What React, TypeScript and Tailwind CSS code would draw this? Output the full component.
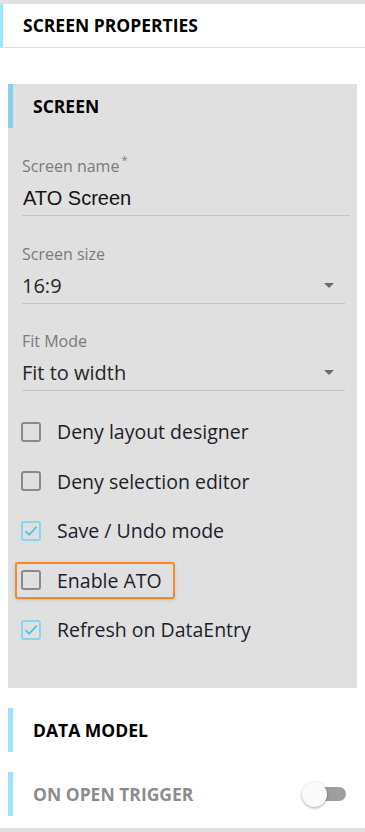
import React, { useState } from 'react';

const font = { fontFamily: '"Open Sans", "Noto Sans", sans-serif' };

interface CheckProps {
  label: string;
  checked: boolean;
  highlight?: boolean;
}

const CheckRow: React.FC<CheckProps> = ({ label, checked, highlight }) => {
  const [on, setOn] = useState(checked);
  return (
    <div className="h-[49.5px] flex items-center">
      <label
        onClick={() => setOn(!on)}
        className={`flex items-center h-[37px] pl-[4px] pr-[11px] -ml-[7px] rounded-[3px] border-2 cursor-pointer ${
          highlight ? 'border-[#f08a2c] shadow-[0_1px_4px_rgba(0,0,0,0.12)]' : 'border-transparent'
        }`}
      >
        <span
          className={`w-[20px] h-[20px] rounded-[3px] border-2 flex items-center justify-center ${
            on ? 'border-[#86d6f3]' : 'border-[#8a8a8a]'
          }`}
        >
          {on && (
            <svg width="14" height="12" viewBox="0 0 14 12" fill="none">
              <path d="M1.5 6.2 L5.2 9.8 L12.5 1.8" stroke="#4bbfe8" strokeWidth="1.8" />
            </svg>
          )}
        </span>
        <span className="ml-[16px] text-[19.5px] text-[#1d1d2b] leading-none">{label}</span>
      </label>
    </div>
  );
};

const Field: React.FC<{ label: string; value: string; select?: boolean; required?: boolean }> = ({
  label,
  value,
  select,
  required,
}) => (
  <div className={`${select ? 'mr-[12px]' : 'mr-[7px]'}`}>
    <div className="h-[20px] flex items-center text-[16px] text-[#7a7a7a]">
      {label}
      {required && <span className="text-[11px] ml-[2px] self-start leading-none -mt-[2px]">*</span>}
    </div>
    <div className="mt-[4px] flex items-center h-[36px] border-b border-[#c4c4c4]">
      <span
        className={`flex-1 text-[20px] ${select ? 'text-[#262626]' : 'text-[#141414] ml-[1px]'}`}
        style={select ? undefined : { fontFamily: '"Liberation Sans", Arial, sans-serif' }}
      >
        {value}
      </span>
      {select && (
        <svg width="10" height="5" viewBox="0 0 10 5" className="mr-[11px]">
          <path d="M0 0 H10 L5 5 Z" fill="#6b6b6b" />
        </svg>
      )}
    </div>
  </div>
);

export default function App() {
  const [trigger, setTrigger] = useState(false);

  return (
    <div className="w-[365px] h-[832px] bg-white flex flex-col" style={font}>
      <div className="h-[4px] bg-[#e0e0e0]" />
      <div className="h-[44px] flex items-center border-b border-[#e0e0e0] border-l-[3px] border-l-[#9fe3f8] pl-[20px]">
        <span className="text-[17.5px] font-bold text-black">SCREEN PROPERTIES</span>
      </div>

      <div className="mt-[36px] mx-[8px] bg-[#e0e0e0] h-[604px] flex flex-col">
        <div className="h-[44px] flex items-center border-l-[5px] border-l-[#87d0ea] pl-[20px]">
          <span className="text-[17.5px] font-bold text-black">SCREEN</span>
        </div>
        <div className="pl-[14px] pt-[28px]">
          <Field label="Screen name" value="ATO Screen" required />
          <div className="h-[28px]" />
          <Field label="Screen size" value="16:9" select />
          <div className="h-[27px]" />
          <Field label="Fit Mode" value="Fit to width" select />
          <div className="pt-[16px]">
            <CheckRow label="Deny layout designer" checked={false} />
            <CheckRow label="Deny selection editor" checked={false} />
            <CheckRow label="Save / Undo mode" checked />
            <CheckRow label="Enable ATO" checked={false} highlight />
            <CheckRow label="Refresh on DataEntry" checked />
          </div>
        </div>
      </div>

      <div className="mt-[20px] mx-[8px] h-[44px] flex items-center border-l-[5px] border-l-[#9fe3f8] pl-[20px]">
        <span className="text-[17.5px] font-bold text-black">DATA MODEL</span>
      </div>

      <div className="mt-[20px] mx-[8px] h-[44px] flex items-center border-l-[5px] border-l-[#9fe3f8] pl-[20px] pr-[11px]">
        <span className="flex-1 text-[17.5px] font-bold text-[#8c8c8c]">ON OPEN TRIGGER</span>
        <button onClick={() => setTrigger(!trigger)} className="relative w-[38px] h-[24px] flex items-center">
          <span className="absolute left-[4px] right-0 h-[14px] rounded-full bg-[#9e9e9e]" />
          <span
            className={`absolute top-0 w-[25px] h-[25px] rounded-full bg-[#fafafa] shadow-[0_1px_3px_rgba(0,0,0,0.35)] ${
              trigger ? 'left-[14px]' : 'left-[-6px]'
            }`}
          />
        </button>
      </div>

      <div className="flex-1" />
      <div className="h-[4px] bg-[#e0e0e0]" />
    </div>
  );
}
